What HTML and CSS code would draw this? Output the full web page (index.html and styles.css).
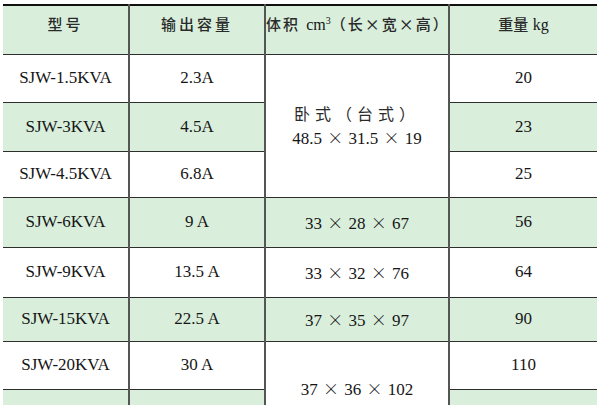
FILE: index.html
```html
<!DOCTYPE html>
<html lang="zh">
<head>
<meta charset="utf-8">
<title>SJW 规格表</title>
<link rel="stylesheet" href="styles.css">
</head>
<body>
<table class="spec">
  <colgroup>
    <col class="c1"><col class="c2"><col class="c3"><col class="c4">
  </colgroup>
  <thead>
    <tr class="head">
      <th><span class="cjk sp">型号</span></th>
      <th><span class="cjk sp">输出容量</span></th>
      <th class="vol"><span class="cjk">体积</span> <span class="lat">cm<sup>3</sup></span><span class="cjk">（长×宽×高）</span></th>
      <th><span class="cjk">重量</span> <span class="lat">kg</span></th>
    </tr>
  </thead>
  <tbody>
    <tr class="r h48">
      <td>SJW-1.5KVA</td><td>2.3A</td>
      <td rowspan="3" class="merge"><div class="cjk sp2">卧式（台式）</div><div>48.5 <span class="x">×</span> 31.5 <span class="x">×</span> 19</div></td>
      <td>20</td>
    </tr>
    <tr class="g h49">
      <td>SJW-3KVA</td><td>4.5A</td><td>23</td>
    </tr>
    <tr class="r h46">
      <td>SJW-4.5KVA</td><td>6.8A</td><td>25</td>
    </tr>
    <tr class="g h50">
      <td>SJW-6KVA</td><td>9 A</td><td>33 <span class="x">×</span> 28 <span class="x">×</span> 67</td><td>56</td>
    </tr>
    <tr class="r h50">
      <td>SJW-9KVA</td><td>13.5 A</td><td>33 <span class="x">×</span> 32 <span class="x">×</span> 76</td><td>64</td>
    </tr>
    <tr class="g h44">
      <td>SJW-15KVA</td><td>22.5 A</td><td>37 <span class="x">×</span> 35 <span class="x">×</span> 97</td><td>90</td>
    </tr>
    <tr class="r h48">
      <td>SJW-20KVA</td><td>30 A</td>
      <td rowspan="2" class="merge white">37 <span class="x">×</span> 36 <span class="x">×</span> 102</td>
      <td>110</td>
    </tr>
    <tr class="g h48">
      <td>&nbsp;</td><td>&nbsp;</td><td>&nbsp;</td>
    </tr>
  </tbody>
</table>
</body>
</html>
```
FILE: styles.css
```css
html, body {
  margin: 0;
  padding: 0;
  background: #ffffff;
}

.spec {
  margin: 4px 0 0 3px;
  width: 594px;
  table-layout: fixed;
  border-collapse: collapse;
  font-family: "Liberation Serif", "Times New Roman", serif;
  font-size: 17px;
  color: #161616;
  border-top: 2px solid #111;
}

.c1 { width: 126px; }
.c2 { width: 136px; }
.c3 { width: 184px; }
.c4 { width: 148px; }

.spec th,
.spec td {
  padding: 0;
  text-align: center;
  border-bottom: 1px solid #2e2e2e;
  border-left: 2px solid #555;
  border-right: 2px solid #555;
}

.spec th:first-child,
.spec td:first-child { border-left: none; }
.spec tr > :last-child { border-right: none; }
.spec tr > td.merge { border-right: 2px solid #555; }

.head th {
  height: 49px;
  vertical-align: top;
  padding-top: 8px;
  box-sizing: border-box;
  background: #d9efdc;
  font-weight: normal;
  line-height: 20px;
}

.cjk {
  font-family: "Noto Sans CJK SC", "Noto Sans", sans-serif;
  font-weight: 500;
  font-size: 15px;
  color: #2a2a2a;
}

.sp { letter-spacing: 3px; }
.sp2 { letter-spacing: 5px; font-size: 16px; line-height: 24px; font-weight: 400; }

.vol { letter-spacing: 2px; white-space: nowrap; }

.lat {
  font-family: "Liberation Serif", "Times New Roman", serif;
  font-size: 16px;
  letter-spacing: 0;
}

.lat sup {
  font-size: 10px;
  vertical-align: 6px;
  line-height: 0;
}

.x {
  font-family: "Noto Sans CJK SC", sans-serif;
  font-weight: 300;
  font-size: 16px;
  margin: 0 1px;
}

.g td { background: #d9efdc; }
.r td { background: #ffffff; }
.merge { background: #ffffff !important; vertical-align: middle; line-height: 24px; }

.h44 { height: 44px; }
.h46 { height: 46px; }
.h47 { height: 47px; }
.h48 { height: 48px; }
.h49 { height: 49px; }
.h50 { height: 50px; }
```
